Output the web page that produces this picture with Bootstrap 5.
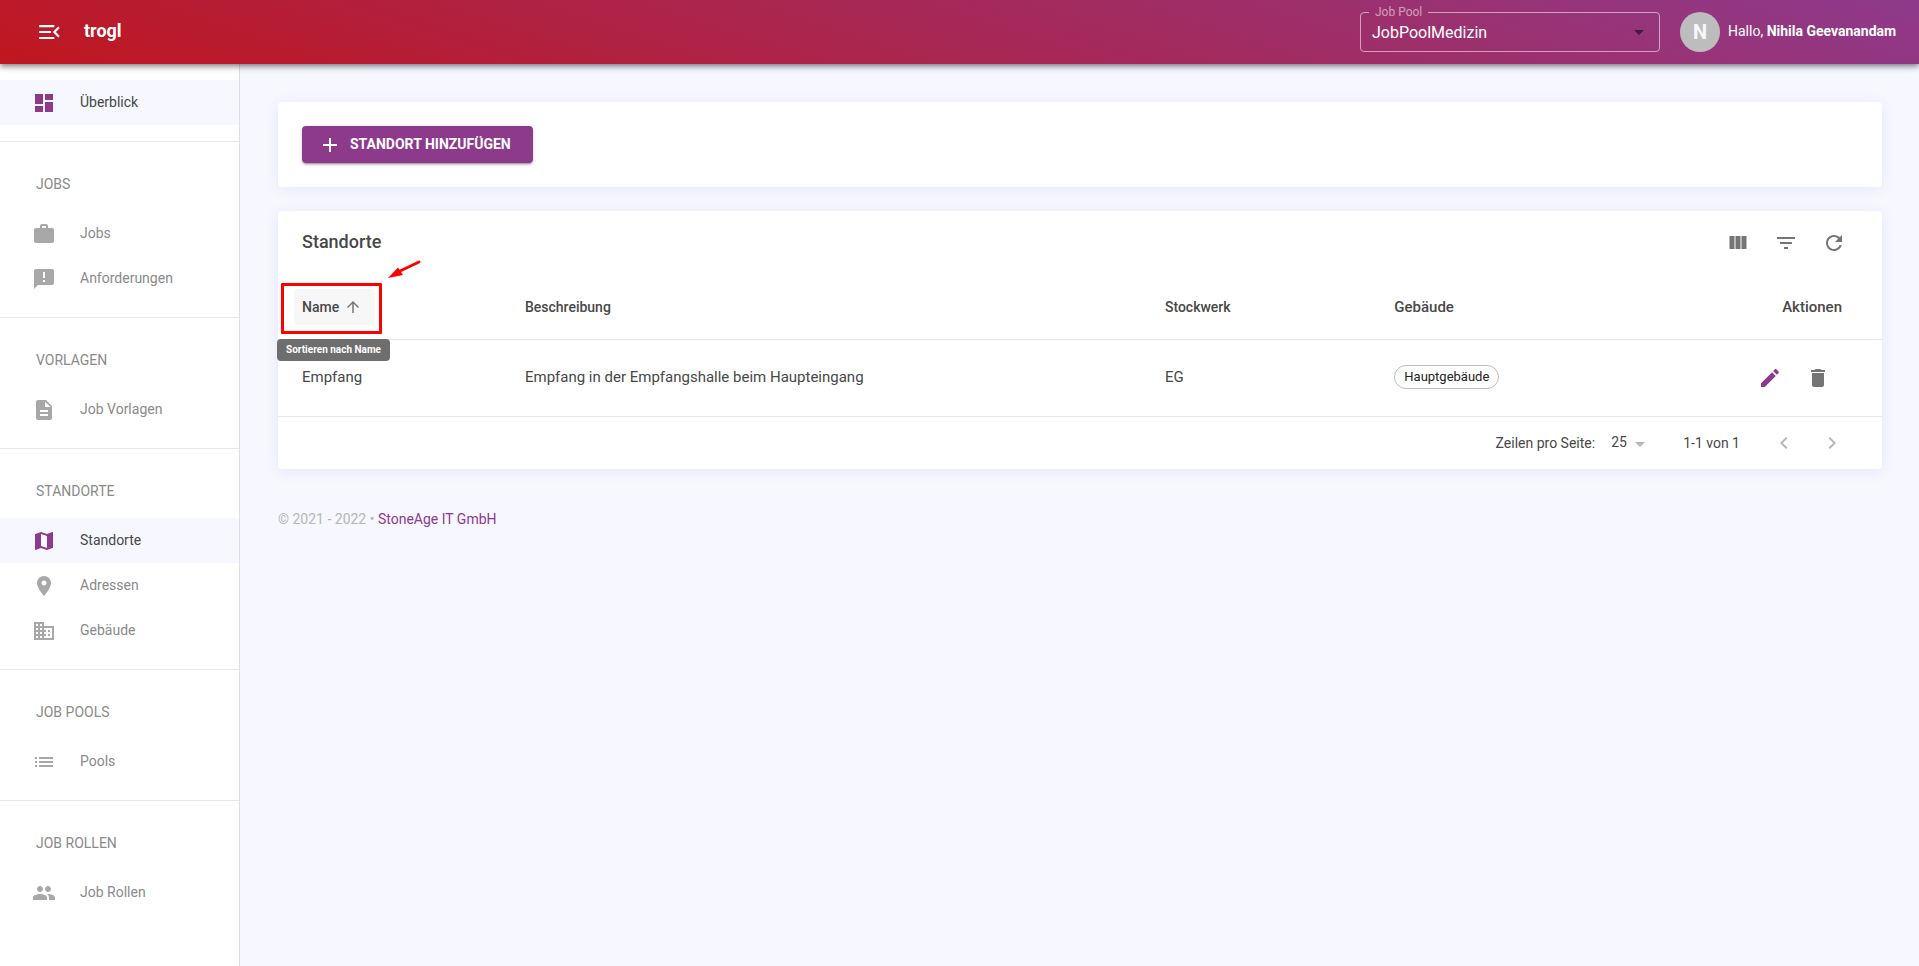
<!DOCTYPE html>
<html lang="de">
<head>
<meta charset="utf-8">
<meta name="viewport" content="width=device-width, initial-scale=1">
<title>trogl – Standorte</title>
<link href="https://cdn.jsdelivr.net/npm/bootstrap@5.3.0/dist/css/bootstrap.min.css" rel="stylesheet">
<style>
  :root { --brand: #8e3a8c; --line: #e8e8ea; --ink: #484848; --canvas: #f6f7ff; }
  body { font-family: Roboto, "Liberation Sans", sans-serif; font-size: 14px; line-height: 20px; color: var(--ink); background: var(--canvas); }
  svg { fill: currentColor; flex: none; display: block; }
  a { color: var(--brand); text-decoration: none; }

  .topbar { height: 64px; padding: 0 18px 0 37px; color: #fff; background: linear-gradient(18deg, #c0161f 0%, #8e3a8c 100%);
    box-shadow: 0 2px 4px -1px rgba(0,0,0,.3), 0 4px 5px rgba(0,0,0,.2), 0 1px 10px rgba(0,0,0,.12); }
  .icon-btn { border: 0; background: none; padding: 0; color: inherit; display: flex; }
  .brand-name { font-size: 18px; line-height: 24px; font-weight: 700; color: #fff; margin-left: 21px; padding-bottom: 2px; }
  .pool-field { width: 300px; height: 46px; margin-top: -6px; border: 1px solid rgba(255,255,255,.55); border-radius: 4px; }
  .pool-field legend { float: none; width: auto; margin: 0 0 0 8px; padding: 0 6px; font-size: 12px; line-height: 12px; color: rgba(255,255,255,.55); }
  .pool-field .form-select { background-color: transparent; border: 0; color: #fff; font-size: 16px; line-height: 20px; padding: 5px 40px 3px 11px; box-shadow: none;
    background-image: url("data:image/svg+xml,%3csvg xmlns='http://www.w3.org/2000/svg' viewBox='0 0 24 24'%3e%3cpath fill='%23451a3c' d='M7 10l5 5 5-5z'/%3e%3c/svg%3e"); background-size: 24px; background-position: right 8px top 2px; }
  .pool-field option { color: var(--ink); }
  .avatar { width: 40px; height: 40px; margin: 0 8px 0 20px; background: #bdbdbd; color: #f6f7ff; font-size: 20px; font-weight: 700; }
  .greeting { min-width: 173px; padding-bottom: 2px; }

  .side { width: 240px; background: #fff; border-right: 1px solid #dedee2; }
  .side section { padding: 16px 0; border-bottom: 1px solid var(--line); }
  .side section:last-child { border-bottom: 0; }
  .side h2 { font-size: 14px; line-height: 20px; font-weight: 400; color: #8a8a8a; margin: 0; padding: 16px 36px 17px; }
  .side .nav-link { height: 45px; padding: 0 32px 2px; gap: 24px; color: #8a8a8a; display: flex; align-items: center; }
  .side .nav-link svg { color: #a8a8a8; margin-top: 3px; }
  .side .nav-link.active { background: var(--canvas); color: var(--ink); }
  .side .nav-link.active svg { color: var(--brand); }

  .page-body { padding: 38px 37px 38px 38px; min-width: 0; }
  .panel { background: #fff; border-radius: 4px; box-shadow: 0 2px 14px rgba(90,90,220,.10); }
  .btn-add { background: var(--brand); color: #fff; border: 0; border-radius: 4px; height: 37px; min-width: 231px; padding: 0 16px; font-size: 14px; line-height: 20px; font-weight: 700;
    box-shadow: 0 3px 1px -2px rgba(0,0,0,.2), 0 2px 2px rgba(0,0,0,.14), 0 1px 5px rgba(0,0,0,.12); }
  .btn-add:hover { background: #7c327a; color: #fff; }
  .btn-add span { padding-bottom: 2px; }
  .panel-head { height: 64px; padding: 0 36px 0 24px; }
  .panel-head h1 { font-size: 18px; line-height: 24px; font-weight: 500; margin: 0; padding-bottom: 2px; }
  .tools { gap: 24px; color: #757575; }
  .edit-btn { color: var(--brand); }

  .places { table-layout: fixed; margin: 0; --bs-table-bg: transparent; --bs-table-color: var(--ink); color: var(--ink); }
  .places > :not(caption) > * > * { border-bottom: 1px solid var(--line); padding: 0 24px; vertical-align: middle; }
  .places th { height: 64px; font-weight: 500; }
  .places th.col-wide { font-size: 15px; }
  .places > tbody > tr > td { height: 77px; font-size: 15px; padding-bottom: 2px; }
  .c-name { width: 13.9%; } .c-desc { width: 39.9%; } .c-floor { width: 14.3%; }
  .places > thead > tr > .c-act { padding-right: 40px; text-align: right; }
  .places > tbody > tr > .c-act { padding-right: 52px; padding-bottom: 0; }
  .sort-btn { border: 0; border-radius: 4px; background: #f7f7f7; color: inherit; font-weight: 500; height: 36px; width: 81px; padding: 0 8px; margin-left: -8px; gap: 5px; }
  .sort-btn svg { color: #757575; }
  .marker { left: 3px; top: 8px; width: 101px; height: 51px; border: 3px solid #f00; border-radius: 1px; pointer-events: none; }
  .marker-arrow { left: 109px; top: -16px; }
  .hint { left: -1px; top: 64px; z-index: 2; background: #6e6e6e; color: #fff; border-radius: 4px; min-width: 113px; padding: 4px 8px; font-size: 10px; line-height: 14px; font-weight: 700; text-align: center; white-space: nowrap; }
  .tag { display: inline-block; border: 1px solid #bdbdbd; border-radius: 12px; height: 24px; padding: 0 9px; font-size: 13px; line-height: 22px; color: #222; }

  .pager { height: 52px; padding: 0 38px; }
  .pager-nav { margin-left: 32px; color: #b8b8b8; }
  .rows-select { width: 40px; padding: 0 20px 2px 0; border: 0; font-size: 14px; line-height: 20px; color: var(--ink); background-color: transparent;
    background-image: url("data:image/svg+xml,%3csvg xmlns='http://www.w3.org/2000/svg' viewBox='0 0 24 24'%3e%3cpath fill='%23b8b8b8' d='M7 10l5 5 5-5z'/%3e%3c/svg%3e"); background-size: 24px; background-position: right -1px top 0; }
  .foot { color: #b4b5bb; margin-top: 40px; }
</style>
</head>
<body class="d-flex flex-column min-vh-100">

<header class="topbar d-flex align-items-center sticky-top">
  <button class="icon-btn" type="button" aria-label="Menü einklappen">
    <svg width="26" height="26" viewBox="0 0 24 24"><path d="M2 18.500h14v-2H2v2zM2 13h11v-2H2v2zm0-7.500v2h14v-2H2zm19 10.090L17.420 12 21 8.410 19.590 7l-5 5 5 5L21 15.590z"/></svg>
  </button>
  <a class="brand-name" href="#">trogl</a>
  <fieldset class="pool-field ms-auto">
    <legend><label class="d-block" for="pool">Job Pool</label></legend>
    <select class="form-select" id="pool"><option>JobPoolMedizin</option></select>
  </fieldset>
  <div class="avatar rounded-circle d-flex align-items-center justify-content-center">N</div>
  <div class="greeting">Hallo, <b>Nihila Geevanandam</b></div>
</header>

<div class="d-flex flex-grow-1">
  <nav class="side flex-shrink-0">
    <section>
      <a class="nav-link active" href="#"><svg width="24" height="24" viewBox="0 0 24 24"><path d="M3 13h8V3H3v10zm0 8h8v-6H3v6zm10 0h8V11h-8v10zm0-18v6h8V3h-8z"/></svg>Überblick</a>
    </section>
    <section>
      <h2>JOBS</h2>
      <a class="nav-link" href="#"><svg width="24" height="24" viewBox="0 0 24 24"><path d="M20 6h-4V4c0-1.110-.89-2-2-2h-4c-1.110 0-2 .89-2 2v2H4c-1.110 0-1.990.89-1.990 2L2 19c0 1.110.89 2 2 2h16c1.110 0 2-.89 2-2V8c0-1.110-.89-2-2-2zm-6 0h-4V4h4v2z"/></svg>Jobs</a>
      <a class="nav-link" href="#"><svg width="24" height="24" viewBox="0 0 24 24"><path d="M20 2H4c-1.100 0-1.990.9-1.990 2L2 22l4-4h14c1.100 0 2-.9 2-2V4c0-1.100-.9-2-2-2zm-7 13h-2v-2h2v2zm0-4h-2V5h2v6z"/></svg>Anforderungen</a>
    </section>
    <section>
      <h2>VORLAGEN</h2>
      <a class="nav-link" href="#"><svg width="24" height="24" viewBox="0 0 24 24"><path d="M14 2H6c-1.100 0-1.990.9-1.990 2L4 20c0 1.100.89 2 1.990 2H18c1.100 0 2-.9 2-2V8l-6-6zm2 16H8v-2h8v2zm0-4H8v-2h8v2zm-3-5V3.500L18.500 9H13z"/></svg>Job Vorlagen</a>
    </section>
    <section>
      <h2>STANDORTE</h2>
      <a class="nav-link active" href="#"><svg width="24" height="24" viewBox="0 0 24 24"><path d="M20.500 3l-.16.030L15 5.100 9 3 3.360 4.900c-.21.070-.36.250-.36.480V20.500c0 .28.220.5.500.5l.16-.030L9 18.900l6 2.100 5.640-1.900c.21-.070.360-.250.360-.480V3.500c0-.28-.220-.5-.5-.5zM15 19l-6-2.110V5l6 2.110V19z"/></svg>Standorte</a>
      <a class="nav-link" href="#"><svg width="24" height="24" viewBox="0 0 24 24"><path d="M12 2C8.130 2 5 5.130 5 9c0 5.250 7 13 7 13s7-7.750 7-13c0-3.870-3.130-7-7-7zm0 9.500c-1.380 0-2.500-1.120-2.500-2.500s1.120-2.500 2.500-2.500 2.500 1.120 2.500 2.500-1.120 2.500-2.500 2.500z"/></svg>Adressen</a>
      <a class="nav-link" href="#"><svg width="24" height="24" viewBox="0 0 24 24"><path d="M12 7V3H2v18h20V7H12zM6 19H4v-2h2v2zm0-4H4v-2h2v2zm0-4H4V9h2v2zm0-4H4V5h2v2zm4 12H8v-2h2v2zm0-4H8v-2h2v2zm0-4H8V9h2v2zm0-4H8V5h2v2zm10 12h-8v-2h2v-2h-2v-2h2v-2h-2V9h8v10zm-2-8h-2v2h2v-2zm0 4h-2v2h2v-2z"/></svg>Gebäude</a>
    </section>
    <section>
      <h2>JOB POOLS</h2>
      <a class="nav-link" href="#"><svg width="24" height="24" viewBox="0 0 24 24"><path d="M3 13h2v-2H3v2zm0 4h2v-2H3v2zm0-8h2V7H3v2zm4 4h14v-2H7v2zm0 4h14v-2H7v2zM7 7v2h14V7H7z"/></svg>Pools</a>
    </section>
    <section>
      <h2>JOB ROLLEN</h2>
      <a class="nav-link" href="#"><svg width="24" height="24" viewBox="0 0 24 24"><path d="M16 11c1.660 0 2.990-1.340 2.990-3S17.660 5 16 5s-3 1.340-3 3 1.340 3 3 3zm-8 0c1.660 0 2.990-1.340 2.990-3S9.660 5 8 5 5 6.340 5 8s1.340 3 3 3zm0 2c-2.330 0-7 1.170-7 3.500V19h14v-2.500c0-2.330-4.670-3.500-7-3.500zm8 0c-.29 0-.62.020-.97.050 1.160.84 1.970 1.970 1.970 3.450V19h6v-2.500c0-2.330-4.670-3.500-7-3.500z"/></svg>Job Rollen</a>
    </section>
  </nav>

  <main class="page-body flex-grow-1">
    <div class="panel p-4 mb-4">
      <button class="btn btn-add d-inline-flex align-items-center gap-2" type="button">
        <svg width="24" height="24" viewBox="0 0 24 24"><path d="M19 13h-6v6h-2v-6H5v-2h6V5h2v6h6v2z"/></svg><span>STANDORT HINZUFÜGEN</span>
      </button>
    </div>

    <div class="panel">
      <div class="panel-head d-flex align-items-center justify-content-between">
        <h1>Standorte</h1>
        <div class="tools d-flex">
          <button class="icon-btn" type="button" aria-label="Spalten"><svg width="24" height="24" viewBox="0 0 24 24"><path d="M3.500 5h5v13h-5zM9.500 5h5v13h-5zM15.500 5h5v13h-5z"/></svg></button>
          <button class="icon-btn" type="button" aria-label="Filter"><svg width="24" height="24" viewBox="0 0 24 24"><path d="M10 18h4v-2h-4v2zM3 6v2h18V6H3zm3 7h12v-2H6v2z"/></svg></button>
          <button class="icon-btn" type="button" aria-label="Aktualisieren"><svg width="24" height="24" viewBox="0 0 24 24"><path d="M17.650 6.350C16.200 4.900 14.210 4 12 4c-4.420 0-7.990 3.580-7.990 8s3.570 8 7.990 8c3.730 0 6.840-2.550 7.730-6h-2.080c-.82 2.330-3.040 4-5.650 4-3.310 0-6-2.690-6-6s2.690-6 6-6c1.660 0 3.140.69 4.220 1.780L13 11h7V4l-2.350 2.350z"/></svg></button>
        </div>
      </div>

      <table class="table places">
        <thead>
          <tr>
            <th class="c-name position-relative" scope="col">
              <button class="sort-btn d-flex align-items-center" type="button" aria-describedby="sort-hint">Name
                <svg width="18" height="18" viewBox="0 0 24 24"><path d="M4 12l1.410 1.410L11 7.830V20h2V7.830l5.580 5.590L20 12l-8-8-8 8z"/></svg>
              </button>
              <div class="marker position-absolute"></div>
              <svg class="marker-arrow position-absolute" width="34" height="20" viewBox="0 0 34 20"><path d="M32 3L13 12" stroke="#f00" stroke-width="3" stroke-linecap="round"/><path d="M1 19L11 8.500l5 7.500z" fill="#f00"/></svg>
              <div class="hint position-absolute" id="sort-hint" role="tooltip">Sortieren nach Name</div>
            </th>
            <th class="c-desc" scope="col">Beschreibung</th>
            <th class="c-floor" scope="col">Stockwerk</th>
            <th class="col-wide" scope="col">Gebäude</th>
            <th class="col-wide c-act" scope="col">Aktionen</th>
          </tr>
        </thead>
        <tbody>
          <tr>
            <td>Empfang</td>
            <td>Empfang in der Empfangshalle beim Haupteingang</td>
            <td>EG</td>
            <td><span class="tag">Hauptgebäude</span></td>
            <td class="c-act">
              <div class="tools d-flex justify-content-end">
                <button class="icon-btn edit-btn" type="button" aria-label="Bearbeiten"><svg width="24" height="24" viewBox="0 0 24 24"><path d="M3 17.250V21h3.750L17.810 9.940l-3.750-3.750L3 17.250zM20.710 7.040c.39-.39.39-1.020 0-1.410l-2.340-2.340c-.39-.39-1.020-.39-1.410 0l-1.830 1.830 3.750 3.750 1.830-1.830z"/></svg></button>
                <button class="icon-btn" type="button" aria-label="Löschen"><svg width="24" height="24" viewBox="0 0 24 24"><path d="M6 19c0 1.100.9 2 2 2h8c1.100 0 2-.9 2-2V7H6v12zM19 4h-3.500l-1-1h-5l-1 1H5v2h14V4z"/></svg></button>
              </div>
            </td>
          </tr>
        </tbody>
      </table>

      <div class="pager d-flex align-items-center justify-content-end">
        <label class="me-3" for="rows">Zeilen pro Seite:</label>
        <select class="rows-select form-select me-4" id="rows"><option>25</option></select>
        <span class="ms-2">1-1 von 1</span>
        <div class="tools pager-nav d-flex">
          <button class="icon-btn" type="button" aria-label="Vorherige Seite"><svg width="24" height="24" viewBox="0 0 24 24"><path d="M15.410 7.410L14 6l-6 6 6 6 1.410-1.410L10.830 12z"/></svg></button>
          <button class="icon-btn" type="button" aria-label="Nächste Seite"><svg width="24" height="24" viewBox="0 0 24 24"><path d="M10 6L8.590 7.410 13.170 12l-4.580 4.590L10 18l6-6z"/></svg></button>
        </div>
      </div>
    </div>

    <footer class="foot">© 2021 - 2022 • <a href="#">StoneAge IT GmbH</a></footer>
  </main>
</div>

<script src="https://cdn.jsdelivr.net/npm/bootstrap@5.3.0/dist/js/bootstrap.bundle.min.js"></script>
</body>
</html>
